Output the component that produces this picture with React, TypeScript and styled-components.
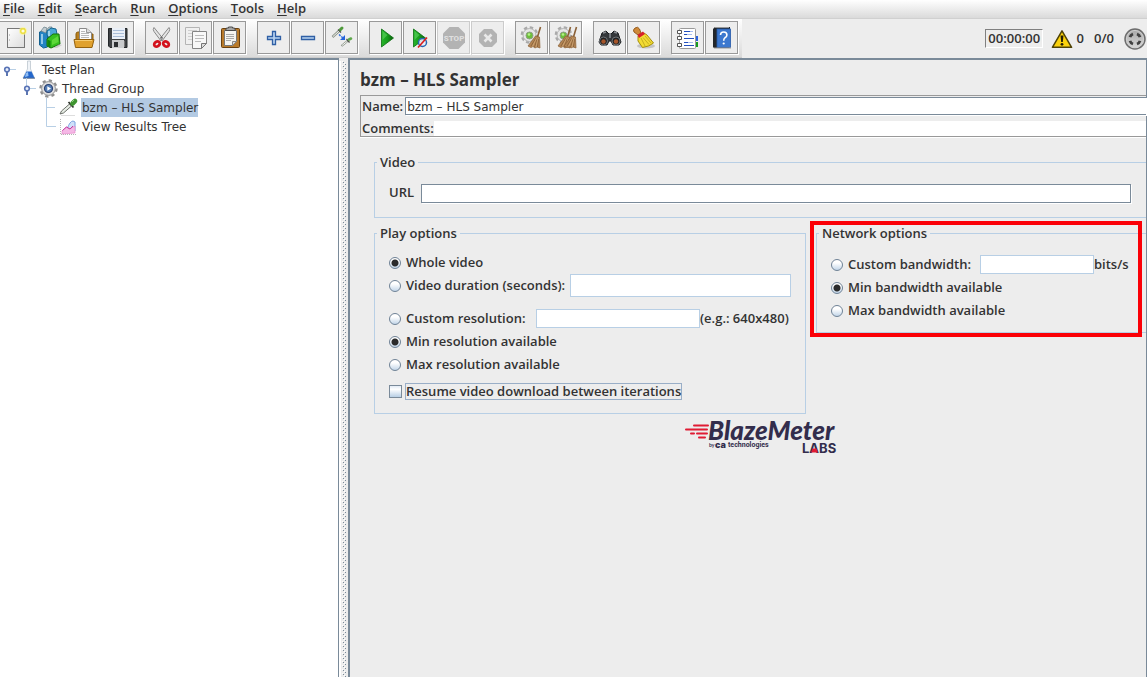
import React, { useState } from 'react';
import styled, { createGlobalStyle, css } from 'styled-components';

const INK = '#333333';
const STEEL = '#7a8a99';
const PALE = '#b8cfe5';
const FACE = '#ededed';

const GlobalStyle = createGlobalStyle`
  *, *::before, *::after { box-sizing: border-box; }
  body {
    margin: 0;
    background: ${FACE};
    color: ${INK};
    font: 600 13px/19px 'Open Sans', 'Noto Sans', sans-serif;
  }
  button, input { font: inherit; color: inherit; }
`;

const Window = styled.div`
  display: flex;
  flex-direction: column;
  min-height: 100vh;
  overflow: hidden;
`;

/* ---------- menu ---------- */

const MenuBar = styled.nav`
  display: flex;
  align-items: flex-start;
  gap: 13px;
  height: 19px;
  padding-left: 3px;
  background: linear-gradient(#ffffff, #dadada);
  border-bottom: 1px solid #d0d0d0;
`;

const MenuButton = styled.button`
  padding: 0;
  border: 0;
  background: none;
  line-height: 17px;
`;

const Mnemonic = styled.span`
  text-decoration: underline;
  text-underline-offset: 2px;
`;

/* ---------- toolbar ---------- */

const TopRow = styled.div`
  display: flex;
  justify-content: space-between;
  height: 39px;
`;

const Toolbar = styled.div`
  display: flex;
  gap: 10px;
  padding: 2px 3px 0 0;
  background: linear-gradient(#ffffff, #dadada);
  border-bottom: 1px solid #cccccc;
`;

const ToolGroup = styled.div`
  display: flex;
  &:first-child { margin-left: -1px; }
`;

const ToolButton = styled.button`
  display: block;
  width: 33px;
  height: 33px;
  margin-right: 1px;
  padding: 0;
  border: 1px solid #999999;
  background: ${FACE};
  box-shadow: 1px 1px 0 #ffffff;
  &:disabled { border-color: #cccccc; }
  svg { display: block; }
`;

const Status = styled.div`
  display: flex;
  align-items: center;
  height: 39px;
`;

const Clock = styled.output`
  width: 58px;
  height: 19px;
  margin-right: 8px;
  border: 1px solid;
  border-color: #808080 #ffffff #ffffff #808080;
  line-height: 17px;
  text-align: center;
`;

const Count = styled.span`
  margin-right: 10px;
`;

/* ---------- split pane ---------- */

const Split = styled.div`
  display: flex;
  flex: 1;
`;

const TreePane = styled.aside`
  flex: 0 0 339px;
  background: #ffffff;
  border: solid ${STEEL};
  border-width: 2px 1px 0 0;
`;

const Divider = styled.div`
  flex: 0 0 9px;
  margin-top: 3px;
  background:
    linear-gradient(${STEEL} 1px, transparent 1px) 4px 1px / 1px 4px repeat-y,
    linear-gradient(${STEEL} 1px, transparent 1px) 6px 3px / 1px 4px repeat-y,
    linear-gradient(#ffffff 1px, transparent 1px) 3px 0 / 1px 4px repeat-y,
    linear-gradient(#ffffff 1px, transparent 1px) 5px 2px / 1px 4px repeat-y,
    linear-gradient(90deg, #ffffff 2px, ${FACE} 2px);
`;

const FormPane = styled.main`
  flex: 1;
  min-width: 0;
  padding: 10px 0 0 10px;
  border: solid ${STEEL};
  border-width: 2px 1px 0 2px;
`;

/* ---------- tree ---------- */

const TreeList = styled.ul`
  margin: 0;
  padding: 0;
  list-style: none;
`;

const TreeRow = styled.div<{ $level: number }>`
  display: flex;
  height: 19px;
  padding-left: ${p => p.$level * 20}px;
  font: 400 12px/20px 'DejaVu Sans', sans-serif;
  svg { display: block; flex: none; overflow: visible; }
`;

const TreeLabel = styled.span<{ $selected?: boolean }>`
  height: 19px;
  padding-left: 1px;
  margin-left: 1px;
  ${p => p.$selected && css`background: #b3cae3;`}
`;

/* ---------- form ---------- */

const Title = styled.h1`
  margin: 0 0 5px;
  font-size: 17px;
  line-height: 20px;
  font-weight: 700;
`;

const NameBox = styled.div`
  display: grid;
  grid-template-rows: 20px 20px;
  height: 42px;
  border: 1px solid #999999;
  border-right: 0;
  box-shadow: 0 1px 0 #ffffff;
`;

const NameRow = styled.div<{ $gap: number }>`
  display: flex;
  gap: ${p => p.$gap}px;
  padding-left: 1px;
`;

const sunken = css`
  border: 1px solid ${STEEL};
  box-shadow: 1px 1px 0 #ffffff;
`;

const NameLabel = styled.label`
  line-height: 20px;
`;

const NameInput = styled.input`
  flex: 1;
  min-width: 0;
  height: 18px;
  margin-top: 1px;
  padding: 1px 1px 0;
  background: #ffffff;
  ${sunken}
  border-right: 0;
  font: 400 12px/16px 'DejaVu Sans', sans-serif;
`;

const CommentInput = styled.input`
  flex: 1;
  min-width: 0;
  height: 15px;
  margin-top: 5px;
  padding: 0 2px;
  border: 0;
  background: #ffffff;
`;

const CommentLabel = styled.label`
  line-height: 24px;
`;

const Sections = styled.div`
  display: grid;
  grid-template-columns: 432px minmax(0, 1fr);
  column-gap: 10px;
  row-gap: 7px;
  align-items: start;
  padding: 17px 0 0 14px;
`;

const Group = styled.fieldset<{ $open?: boolean; $wide?: boolean; $pad: string }>`
  min-width: 0;
  margin: 0;
  padding: 0 2px;
  border: 1px solid ${PALE};
  ${p => p.$open && 'border-right: 0;'}
  ${p => p.$wide && 'grid-column: 1 / -1;'}
  & > div { padding: ${p => p.$pad}; }
`;

const Legend = styled.legend`
  padding: 0 3px;
  line-height: 17px;
`;

const Rows = styled.div`
  display: flex;
  flex-direction: column;
`;

const UrlRow = styled.div`
  display: flex;
  gap: 7px;
`;

const UrlInput = styled.input`
  flex: 1;
  min-width: 0;
  height: 19px;
  margin-top: 1px;
  background: #ffffff;
  ${sunken}
`;

const OptionRow = styled.div<{ $after?: number }>`
  display: flex;
  align-items: center;
  height: 23px;
  margin-bottom: ${p => p.$after ?? 0}px;
`;

const Choice = styled.label<{ $width?: number }>`
  display: flex;
  align-items: center;
  gap: 5px;
  flex: none;
  white-space: nowrap;
  ${p => p.$width && `width: ${p.$width}px;`}
`;

const Radio = styled.input.attrs({ type: 'radio' })`
  appearance: none;
  flex: none;
  width: 12px;
  height: 12px;
  margin: 0;
  border: 1px solid #6f8296;
  border-radius: 50%;
  background: linear-gradient(#ffffff 30%, #c3d6e9);
  &:checked {
    background:
      radial-gradient(circle, #2b2b2b 3px, transparent 4px),
      linear-gradient(#ffffff 30%, #c3d6e9);
  }
`;

const Checkbox = styled.input.attrs({ type: 'checkbox' })`
  appearance: none;
  flex: none;
  width: 13px;
  height: 13px;
  margin: 0;
  border: 1px solid ${STEEL};
  background: linear-gradient(#e2ebf5, #ffffff 30%, #b8cfe5);
  &:checked { background: ${STEEL}; }
`;

const FocusText = styled.span`
  margin-left: -2px;
  border: 1px solid #99aec7;
  line-height: 15px;
`;

const Field = styled.input<{ $width?: number; $tall?: boolean }>`
  ${p => (p.$width ? `width: ${p.$width}px;` : 'flex: 1;')}
  min-width: 0;
  height: ${p => (p.$tall ? 23 : 19)}px;
  border: 1px solid ${PALE};
  background: #ffffff;
`;

const NetworkCell = styled.div`
  position: relative;
  min-width: 0;
`;

const Highlight = styled.div`
  position: absolute;
  inset: -4px 4px -4px -6px;
  border: 4px solid #fb0007;
  pointer-events: none;
`;

const LogoRow = styled.footer`
  display: flex;
  justify-content: center;
  padding-left: 14px;
  svg { display: block; overflow: visible; }
`;

/* ---------- toolbar icons, drawn on a 31px face ---------- */

const Face = ({ children }: { children: React.ReactNode }) => (
  <svg width="31" height="31" viewBox="0 0 31 31" aria-hidden="true">{children}</svg>
);

const NewIcon = () => (
  <Face>
    <defs><linearGradient id="pg" x1="0" y1="0" x2="1" y2="1"><stop offset="0" stopColor="#fff" /><stop offset="1" stopColor="#dcdcdc" /></linearGradient></defs>
    <rect x="7.500" y="6.500" width="17" height="19" fill="url(#pg)" stroke="#777" />
    <path d="M9 13h1M9 18h1" stroke="#999" />
    <circle cx="23" cy="9" r="4" fill="#f8f39a" opacity=".7" />
    <circle cx="23" cy="9" r="2.300" fill="#fffde0" stroke="#eddf3c" strokeWidth="1.400" />
  </Face>
);

const TemplatesIcon = () => (
  <Face>
    <path d="M5.500 10l4-1 4 2v14l-4 1-4-3z" fill="#2283c4" stroke="#14608f" />
    <path d="M7 9l3-4 3 1-1 5zM12 9l3-4h3l-2 6z" fill="#c3ccd0" stroke="#6f8791" strokeWidth=".8" />
    <path d="M13 13V9l4-3 5 1 1 5-8 4z" fill="#4aa8d6" stroke="#17658f" />
    <path d="M8 12v10M15 9v5" stroke="#bfe6f7" strokeWidth="1.400" />
    <path d="M13 17l6-5h6l1 10-9 4-4-2z" fill="#35c01f" stroke="#16720b" />
    <path d="M13.500 17.500l3 1.500v7l-3-2z" fill="#15840c" />
    <path d="M18 18l6-4 .500 6-6.500 3z" fill="#7ae84d" opacity=".6" />
    <path d="M25 22l3 1-5 3h-4z" fill="#aaa" opacity=".5" />
  </Face>
);

const OpenIcon = () => (
  <Face>
    <path d="M8 24V12q0-2 2-2h4l1 2h10v6" fill="#b97f1e" stroke="#8b5c0b" />
    <path d="M11.500 18V6.500h7l5 4V18z" fill="#fbfbfb" stroke="#888" />
    <path d="M13 9.500h4M13 11.500h8M13 13.500h8M13 15.500h8" stroke="#b9b9b9" />
    <path d="M18.500 6.500v4h5" fill="#ddd" stroke="#999" />
    <path d="M6 17.500h20l-2 8H7.500z" fill="#e0a12e" stroke="#94620f" />
    <path d="M7 18.500h17" stroke="#f6cc72" />
  </Face>
);

const SaveIcon = () => (
  <Face>
    <path d="M6.500 6.500h18.500v19H8l-1.500-1.500z" fill="#3f4245" stroke="#25282b" />
    <rect x="10" y="6" width="13" height="11" fill="#e9eff7" />
    <path d="M11 8.500h11M11 11.500h11M11 14.500h11" stroke="#a9bdd8" />
    <rect x="10" y="18" width="12" height="8" fill="#c9cbcd" />
    <rect x="12" y="20" width="4" height="5" fill="#2c2f32" />
    <path d="M22.500 19v6" stroke="#777" />
  </Face>
);

const CutIcon = () => (
  <Face>
    <path d="M8 5.500q-1.500 2 0 4l7 9.500 1.500-3zM23 5.500q1.500 2 0 4l-7 9.500-1.500-3z" fill="#e4e4e4" stroke="#888" />
    <circle cx="15.500" cy="15.500" r="1" fill="#666" />
    <ellipse cx="11" cy="22" rx="3" ry="2.300" transform="rotate(-35 11 22)" fill="#eee" stroke="#d3121d" strokeWidth="2.800" />
    <ellipse cx="20" cy="22" rx="3" ry="2.300" transform="rotate(35 20 22)" fill="#eee" stroke="#d3121d" strokeWidth="2.800" />
  </Face>
);

const CopyIcon = () => (
  <Face>
    <path d="M5.500 5.500h14v17h-14z" fill="#f0f0f0" stroke="#b4b4b4" />
    <path d="M8 8.500h9M8 11.500h4M8 14.500h4M8 17.500h4" stroke="#cfcfcf" />
    <path d="M12.500 9.500h14v12l-5 5h-9z" fill="#f8f8f8" stroke="#858585" />
    <path d="M15 13.500h9M15 16.500h9M15 19.500h6" stroke="#bcbcbc" />
    <path d="M26.500 21.500h-5v5z" fill="#ddd" stroke="#777" />
  </Face>
);

const PasteIcon = () => (
  <Face>
    <rect x="7.500" y="6.500" width="18" height="19" rx="1" fill="#b87a2b" stroke="#684010" />
    <path d="M10.500 8.500h12v11l-4 4h-8z" fill="#f5f5f2" stroke="#777" />
    <path d="M12 12.500h8M12 14.500h8M12 16.500h8M12 18.500h5" stroke="#aaa" />
    <path d="M22.500 19.500h-4v4z" fill="#ddd" stroke="#888" />
    <path d="M11.500 8.500l1-2.500h2V5h4v1h2l1 2.500z" fill="#a6a6a6" stroke="#4b4b4b" />
  </Face>
);

const PlusIcon = () => (
  <Face><path d="M14.500 9.500h3v5h5v3h-5v5h-3v-5h-5v-3h5z" fill="#b9d3f0" stroke="#2f5fa5" strokeWidth="1.300" /></Face>
);

const MinusIcon = () => (
  <Face><path d="M9.500 14.500h13v3h-13z" fill="#b9d3f0" stroke="#2f5fa5" strokeWidth="1.300" /></Face>
);

const ToggleIcon = () => (
  <Face>
    <path d="M6.500 15l7-6.500" stroke="#8d948a" strokeWidth="2.400" />
    <path d="M7 14.500l6-5.500" stroke="#f2f5ef" />
    <path d="M12 7.500l3 3" stroke="#4a5046" strokeWidth="1.200" />
    <path d="M14.500 7.500L16 6" stroke="#4f9a3b" strokeWidth="3" strokeLinecap="round" />
    <path d="M15.500 24l6-5" stroke="#8d948a" strokeWidth="2.200" />
    <path d="M16 23.500l5-4" stroke="#f2f5ef" />
    <path d="M20.500 17l3 3.500" stroke="#4a5046" strokeWidth="1.200" />
    <path d="M23 17.500l2-1" stroke="#5fa84b" strokeWidth="2.600" strokeLinecap="round" />
    <path d="M13 12.500l4 3.500" stroke="#2f6fe0" strokeWidth="1.500" strokeDasharray="2 1" />
    <path d="M19 13v5h-5z" fill="#2463dc" />
  </Face>
);

const Triangle = () => (
  <>
    <defs><linearGradient id="gr" x1="0" y1="0" x2="1" y2="0"><stop offset="0" stopColor="#27b42c" /><stop offset=".5" stopColor="#169c1b" /><stop offset="1" stopColor="#0a5c0d" /></linearGradient></defs>
    <path d="M10.500 7v18L22.500 16z" fill="url(#gr)" stroke="#0b6d10" strokeWidth=".8" />
    <path d="M11.500 9l5 4-5 5z" fill="#5fd463" opacity=".6" />
  </>
);

const StartIcon = () => <Face><g transform="translate(1 0)"><Triangle /></g></Face>;

const StartNoPauseIcon = () => (
  <Face>
    <g transform="translate(-1 0)"><Triangle /></g>
    <circle cx="18.500" cy="20.500" r="4" fill="#e4ecf7" fillOpacity=".9" stroke="#2766b0" strokeWidth="1.500" />
    <path d="M14 25.500l9-10" stroke="#dc1a1a" strokeWidth="1.600" />
  </Face>
);

const StopIcon = () => (
  <Face>
    <path d="M11.500 5h9l6.500 6.500v9L20.500 27h-9L5 20.500v-9z" fill="#b3b3b3" />
    <text x="16" y="19" textAnchor="middle" fontFamily="Roboto, sans-serif" fontWeight="900" fontSize="8" fill="#dedede">STOP</text>
  </Face>
);

const ShutdownIcon = () => (
  <Face>
    <path d="M12 7h8l5 5v8l-5 5h-8l-5-5v-8z" fill="#b3b3b3" />
    <path d="M12.500 12.500l7 7M19.500 12.500l-7 7" stroke="#e9e9e9" strokeWidth="2.600" />
  </Face>
);

const Gear = () => (
  <>
    <circle cx="13.500" cy="13" r="7.500" fill="none" stroke="#a9a9a9" strokeWidth="2.600" strokeDasharray="3.400 2.490" />
    <circle cx="13.500" cy="13" r="6.500" fill="#e6e6e6" stroke="#b5b5b5" />
    <circle cx="13.500" cy="13.500" r="3.500" fill="#6cc03a" stroke="#8f9d86" />
    <circle cx="13" cy="12.500" r="1.300" fill="#b6ee8b" />
  </>
);

const Straw = () => (
  <>
    <path d="M24.500 5l-3 10" stroke="#8a6037" strokeWidth="1.600" />
    <path d="M19.500 14l4 1 .500 11-3-1-2 1-2-1.500-2 1-3-1.500z" fill="#b48655" stroke="#8b6036" strokeWidth=".7" />
    <path d="M20 16l-5 8M21.500 16l-3 9M22.500 17l-1 8" stroke="#7d5631" strokeWidth=".7" />
    <path d="M20.500 16l-4 8.500M22 16l-2 9" stroke="#d9b282" strokeWidth=".6" />
  </>
);

const ClearIcon = () => <Face><Gear /><Straw /></Face>;

const ClearAllIcon = () => (
  <Face>
    <Gear />
    <g transform="translate(-4 0)"><Straw /></g>
    <g transform="translate(2 0)"><Straw /></g>
  </Face>
);

const SearchIcon = () => (
  <Face>
    <path d="M8 11l4-2 3 3h2l3-3 4 2 3 9-2 3h-6l-2-4h-2l-2 4H7l-2-3z" fill="#34373a" stroke="#1a1c1e" />
    <path d="M9 11l3-1M20 10l3 1" stroke="#8b8f94" strokeWidth="1.500" />
    <path d="M15 12h2v4h-2z" fill="#777b80" />
    <circle cx="9.500" cy="19" r="4" fill="#202224" stroke="#707478" />
    <circle cx="22" cy="19" r="4" fill="#202224" stroke="#707478" />
    <circle cx="9.500" cy="19.500" r="2.200" fill="#a5552a" />
    <circle cx="22" cy="19.500" r="2.200" fill="#a5552a" />
  </Face>
);

const SearchResetIcon = () => (
  <Face>
    <ellipse cx="18" cy="24" rx="9" ry="2.500" fill="#c4c4c4" />
    <path d="M7 6q3-2 4.500 1l1.500 4-3 2-4-3q-1.500-2 1-4z" fill="#cf8a3a" stroke="#8d5518" strokeWidth=".9" />
    <path d="M10 14l6-3 3 2 6.500 8q-4 3.500-11 4.500L10 19z" fill="#f3dc34" stroke="#a5900c" />
    <path d="M13 16l4 8M15 15.500l6 7M17 14l6 7" stroke="#b9a31a" strokeWidth=".8" />
    <path d="M9.500 13l5.500-3.500 2 2.500-6 4z" fill="#d7202a" />
  </Face>
);

const FunctionsIcon = () => (
  <Face>
    <path d="M22 14h4v5h-4z" fill="#2c62dc" />
    <path d="M22 20h4v5h-4z" fill="#169b20" />
    <rect x="7.500" y="6.500" width="16" height="20" rx="1" fill="#ffffff" stroke="#9a9a9a" />
    <path d="M5.500 8.500h4v3h-4zM5.500 14.500h4v3h-4zM5.500 21.500h4v3h-4z" fill="#fff" stroke="#555" />
    <path d="M12 9.500h6M12 12.500h3M12 16.500h10M12 20.500h4M12 23.500h10" stroke="#2350c0" />
    <path d="M18 9.500h3M15 12.500h5M16 20.500h5" stroke="#a7bdf0" />
  </Face>
);

const HelpIcon = () => (
  <Face>
    <path d="M7 7l2-2h15v2l-1 1v18H8l-1-1z" fill="#23272b" />
    <path d="M9 5.500h14" stroke="#999" />
    <rect x="11" y="7" width="13.500" height="18.500" fill="#3c78cf" stroke="#2559a8" strokeWidth=".8" />
    <path d="M8 26h17" stroke="#999" />
    <path d="M14.500 13q0-3 3.200-3t3.200 3q0 1.700-2 2.800-1.200.800-1.200 3" fill="none" stroke="#ffffff" strokeWidth="1.600" />
    <circle cx="17.700" cy="21.500" r="1.100" fill="#ffffff" />
  </Face>
);

/* ---------- status icons ---------- */

const WarningIcon = () => (
  <svg width="22" height="20" viewBox="0 0 22 20" aria-label="Errors">
    <path d="M11 1.800L20.600 18.300H1.400z" fill="#fbd20c" stroke="#4f4306" strokeWidth="1.500" strokeLinejoin="round" />
    <path d="M9.500 6.500h3l-.700 6.500h-1.600z" fill="#221d04" />
    <circle cx="11" cy="15.300" r="1.400" fill="#221d04" />
  </svg>
);

const EngineIcon = () => (
  <svg width="23" height="24" viewBox="0 0 23 24" aria-label="Remote engines">
    <defs><linearGradient id="en" x1="0" y1="0" x2="0" y2="1"><stop offset="0" stopColor="#a4a4a4" /><stop offset="1" stopColor="#dcdcdc" /></linearGradient></defs>
    <circle cx="11" cy="12" r="10" fill="url(#en)" stroke="#6e6e6e" strokeWidth="1.500" />
    <circle cx="11" cy="12" r="8.500" fill="none" stroke="#cfcfcf" />
    <path d="M6 10.200q.700-2.300 3-3.200M13 7q2.300.900 3 3.200M16 13.800q-.700 2.300-3 3.200M9 17q-2.300-.900-3-3.200" fill="none" stroke="#404040" strokeWidth="2.800" />
  </svg>
);

/* ---------- tree drawings ---------- */

const Handle = ({ stem }: { stem?: boolean }) => (
  <svg width="20" height="19" viewBox="0 0 20 19" aria-hidden="true">
    {stem && <path d="M6.500 -1v8" stroke={PALE} />}
    <path d="M9 9.500h7" stroke={PALE} />
    <path d="M7 11v5" stroke="#5d76b0" strokeWidth="2" />
    <circle cx="7" cy="9.500" r="2.300" fill="#e8eefa" stroke="#5873b5" strokeWidth="1.600" />
  </svg>
);

const Elbow = ({ last }: { last?: boolean }) => (
  <svg width="20" height="19" viewBox="0 0 20 19" aria-hidden="true">
    <path d={last ? 'M6.500 0v9.500H16' : 'M6.500 0v19M6.500 9.500H15'} fill="none" stroke={PALE} />
  </svg>
);

const FlaskIcon = () => (
  <svg width="20" height="19" viewBox="0 0 20 19" aria-hidden="true">
    <path d="M7.500 1v8L3 18h11.500L10.500 9V1z" fill="#f0f4f8" stroke="#bcc6cf" strokeWidth=".8" />
    <path d="M6.500 11.500h5l3 6.500H3.200z" fill="#2467cc" />
    <path d="M6 13l2-1 .500 4-3.500 1z" fill="#8fbdf3" />
    <path d="M3 18.200h12" stroke="#5c7396" />
  </svg>
);

const GroupIcon = () => (
  <svg width="20" height="19" viewBox="0 0 20 19" aria-hidden="true">
    <circle cx="8.500" cy="9.500" r="8" fill="none" stroke="#8f8f8f" strokeWidth="2.400" strokeDasharray="3.200 3.080" />
    <circle cx="8.500" cy="9.500" r="6.900" fill="#dedede" stroke="#959595" />
    <circle cx="8.500" cy="9.500" r="4" fill="#557fb8" stroke="#2d4270" strokeWidth="1.200" />
    <path d="M7.300 7.200v4.600l3.700-2.300z" fill="#fff" />
  </svg>
);

const DropperIcon = () => (
  <svg width="20" height="19" viewBox="0 0 20 19" aria-hidden="true">
    <path d="M1 17.500h14" stroke="#dddddd" />
    <path d="M0 16l1.500-3 8-7 2 2-8 7z" fill="#e6ece4" stroke="#5d625b" strokeWidth=".9" />
    <path d="M8.500 4l5 5.500" stroke="#33382f" strokeWidth="1.800" />
    <path d="M12.500 5.500l2.500-2.500" stroke="#3f9430" strokeWidth="4.600" strokeLinecap="round" />
    <path d="M12 4l2-2" stroke="#8ed07d" />
  </svg>
);

const ResultsIcon = () => (
  <svg width="20" height="19" viewBox="0 0 20 19" aria-hidden="true">
    <path d="M.500 2v15.500H16" fill="none" stroke="#b5b5b5" strokeDasharray="1 1" />
    <path d="M7 12q3-8 6-8t2 4v6H7z" fill="#cfe0f9" stroke="#7fa4e2" />
    <path d="M2 17v-3l4-4 4 2 5-3v7z" fill="#f5b8e6" stroke="#e27fc6" strokeWidth=".6" />
    <path d="M2.500 13.500l4-3.500 3.500 2 3-3" fill="none" stroke="#c23c9e" />
  </svg>
);

const Logo = () => (
  <svg width="152" height="43" viewBox="0 -7 152 43" role="img" aria-label="BlazeMeter Labs by CA technologies">
    <path d="M10 4.500h14M2 8.500h21M13 12.500h10M7 12.500h3M15 16.500h6" stroke="#e01b33" strokeWidth="2" strokeLinecap="round" />
    <text x="24" y="19" fontFamily="Lato, sans-serif" fontStyle="italic" fontWeight="900" fontSize="26" fill="#332d4c">BlazeMeter</text>
    <text x="25" y="26" fontFamily="Lato, sans-serif" fontWeight="700" fontSize="5" fill="#332d4c">by</text>
    <text x="31" y="27" fontFamily="Inter, sans-serif" fontWeight="900" fontSize="9" fill="#332d4c">ca</text>
    <text x="44" y="26" fontFamily="Roboto, sans-serif" fontWeight="700" fontSize="7" fill="#332d4c">technologies</text>
    <text x="118" y="32" fontFamily="Inter, sans-serif" fontWeight="700" fontSize="13" fill="#332d4c">LABS</text>
    <path d="M128.500 27.500h4l1.500 4h-7z" fill="#e01b33" />
  </svg>
);

/* ---------- data ---------- */

const menus = ['File', 'Edit', 'Search', 'Run', 'Options', 'Tools', 'Help'];

type Tool = { name: string; icon: React.ReactNode; disabled?: boolean };

const tools: Tool[][] = [
  [
    { name: 'New', icon: <NewIcon /> },
    { name: 'Templates', icon: <TemplatesIcon /> },
    { name: 'Open', icon: <OpenIcon /> },
    { name: 'Save', icon: <SaveIcon /> },
  ],
  [
    { name: 'Cut', icon: <CutIcon /> },
    { name: 'Copy', icon: <CopyIcon /> },
    { name: 'Paste', icon: <PasteIcon /> },
  ],
  [
    { name: 'Expand all', icon: <PlusIcon /> },
    { name: 'Collapse all', icon: <MinusIcon /> },
    { name: 'Toggle', icon: <ToggleIcon /> },
  ],
  [
    { name: 'Start', icon: <StartIcon /> },
    { name: 'Start no pauses', icon: <StartNoPauseIcon /> },
    { name: 'Stop', icon: <StopIcon />, disabled: true },
    { name: 'Shutdown', icon: <ShutdownIcon />, disabled: true },
  ],
  [
    { name: 'Clear', icon: <ClearIcon /> },
    { name: 'Clear all', icon: <ClearAllIcon /> },
  ],
  [
    { name: 'Search tree', icon: <SearchIcon /> },
    { name: 'Reset search', icon: <SearchResetIcon /> },
  ],
  [
    { name: 'Function helper', icon: <FunctionsIcon /> },
    { name: 'Help', icon: <HelpIcon /> },
  ],
];

export default function App() {
  const [name, setName] = useState('bzm – HLS Sampler');
  return (
    <Window>
      <GlobalStyle />
      <MenuBar>
        {menus.map(m => (
          <MenuButton key={m} type="button"><Mnemonic>{m[0]}</Mnemonic>{m.slice(1)}</MenuButton>
        ))}
      </MenuBar>
      <TopRow>
        <Toolbar role="toolbar">
          {tools.map((group, i) => (
            <ToolGroup key={i}>
              {group.map(t => (
                <ToolButton key={t.name} type="button" aria-label={t.name} disabled={t.disabled}>{t.icon}</ToolButton>
              ))}
            </ToolGroup>
          ))}
        </Toolbar>
        <Status>
          <Clock>00:00:00</Clock>
          <WarningIcon />
          <Count>&nbsp;0</Count>
          <Count>0/0</Count>
          <EngineIcon />
        </Status>
      </TopRow>
      <Split>
        <TreePane>
          <TreeList>
            <li>
              <TreeRow $level={0}><Handle /><FlaskIcon /><TreeLabel>Test Plan</TreeLabel></TreeRow>
              <TreeList>
                <li>
                  <TreeRow $level={1}><Handle stem /><GroupIcon /><TreeLabel>Thread Group</TreeLabel></TreeRow>
                  <TreeList>
                    <li><TreeRow $level={2}><Elbow /><DropperIcon /><TreeLabel $selected>bzm – HLS Sampler</TreeLabel></TreeRow></li>
                    <li><TreeRow $level={2}><Elbow last /><ResultsIcon /><TreeLabel>View Results Tree</TreeLabel></TreeRow></li>
                  </TreeList>
                </li>
              </TreeList>
            </li>
          </TreeList>
        </TreePane>
        <Divider />
        <FormPane>
          <Title>bzm – HLS Sampler</Title>
          <NameBox>
            <NameRow $gap={2}>
              <NameLabel htmlFor="name">Name:</NameLabel>
              <NameInput id="name" value={name} onChange={e => setName(e.target.value)} />
            </NameRow>
            <NameRow $gap={0}>
              <CommentLabel htmlFor="comments">Comments:</CommentLabel>
              <CommentInput id="comments" />
            </NameRow>
          </NameBox>
          <Sections>
            <Group $wide $open $pad="12px 13px 14px 12px">
              <Legend>Video</Legend>
              <UrlRow>
                <label htmlFor="url">URL</label>
                <UrlInput id="url" />
              </UrlRow>
            </Group>
            <Group $pad="9px 12px 10px 12px">
              <Legend>Play options</Legend>
              <Rows>
                <OptionRow><Choice><Radio name="length" defaultChecked />Whole video</Choice></OptionRow>
                <OptionRow $after={10}>
                  <Choice $width={181}><Radio name="length" />Video duration (seconds):</Choice>
                  <Field $tall aria-label="Video duration" />
                </OptionRow>
                <OptionRow>
                  <Choice $width={147}><Radio name="resolution" />Custom resolution:</Choice>
                  <Field $width={164} aria-label="Custom resolution" />
                  <span>(e.g.: 640x480)</span>
                </OptionRow>
                <OptionRow><Choice><Radio name="resolution" defaultChecked />Min resolution available</Choice></OptionRow>
                <OptionRow $after={4}><Choice><Radio name="resolution" />Max resolution available</Choice></OptionRow>
                <OptionRow><Choice><Checkbox /><FocusText>Resume video download between iterations</FocusText></Choice></OptionRow>
              </Rows>
            </Group>
            <NetworkCell>
              <Group $open $pad="11px 12px 10px 12px">
                <Legend>Network options</Legend>
                <Rows>
                  <OptionRow>
                    <Choice $width={149}><Radio name="bandwidth" />Custom bandwidth:</Choice>
                    <Field $width={114} aria-label="Custom bandwidth" />
                    <span>bits/s</span>
                  </OptionRow>
                  <OptionRow><Choice><Radio name="bandwidth" defaultChecked />Min bandwidth available</Choice></OptionRow>
                  <OptionRow><Choice><Radio name="bandwidth" />Max bandwidth available</Choice></OptionRow>
                </Rows>
              </Group>
              <Highlight />
            </NetworkCell>
          </Sections>
          <LogoRow><Logo /></LogoRow>
        </FormPane>
      </Split>
    </Window>
  );
}
